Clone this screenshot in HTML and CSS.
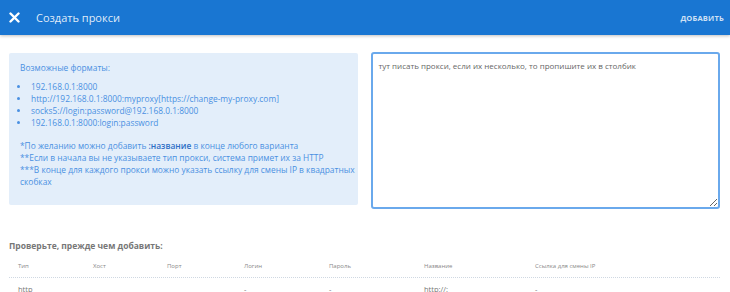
FILE: index.html
```html
<!DOCTYPE html>
<html lang="ru">
<head>
<meta charset="utf-8">
<title>Создать прокси</title>
<link rel="stylesheet" href="styles.css">
</head>
<body>
<header class="topbar">
  <button class="close" aria-label="Закрыть">
    <svg width="11" height="11" viewBox="0 0 11 11"><path d="M1.5 1.5 L9.5 9.5 M9.5 1.5 L1.5 9.5" stroke="#fff" stroke-width="2.4" stroke-linecap="round"/></svg>
  </button>
  <h1 class="title">Создать прокси</h1>
  <button class="add">ДОБАВИТЬ</button>
</header>
<main class="content">
  <section class="editor">
    <div class="hint">
      <p class="hint-title">Возможные форматы:</p>
      <ul class="formats">
        <li>192.168.0.1:8000</li>
        <li>http://192.168.0.1:8000:myproxy[https://change-my-proxy.com]</li>
        <li>socks5://login:password@192.168.0.1:8000</li>
        <li>192.168.0.1:8000:login:password</li>
      </ul>
      <p class="notes">*По желанию можно добавить <b>:название</b> в конце любого варианта<br>**Если в начала вы не указываете тип прокси, система примет их за HTTP<br>***В конце для каждого прокси можно указать ссылку для смены IP в квадратных скобках</p>
    </div>
    <textarea class="input" placeholder="тут писать прокси, если их несколько, то пропишите их в столбик"></textarea>
  </section>
  <section class="preview">
    <h2 class="preview-title">Проверьте, прежде чем добавить:</h2>
    <div class="table">
      <div class="row head">
        <span>Тип</span><span>Хост</span><span>Порт</span><span>Логин</span><span>Пароль</span><span>Название</span><span>Ссылка для смены IP</span>
      </div>
      <div class="row">
        <span>http</span><span></span><span></span><span>-</span><span>-</span><span>http://:</span><span>-</span>
      </div>
    </div>
  </section>
</main>
</body>
</html>
```
FILE: styles.css
```css
* { box-sizing: border-box; }
html, body { margin: 0; padding: 0; background: #fff; }
body { font-family: "Open Sans", "Noto Sans", sans-serif; overflow: hidden; }

.topbar {
  height: 35px;
  background: #1976d2;
  display: flex;
  align-items: center;
  padding: 0 6px 0 7px;
  box-shadow: 0 1px 3px rgba(0,0,0,0.25);
}
.close {
  background: none; border: 0; padding: 0;
  width: 14px; height: 14px;
  display: flex; align-items: center; justify-content: center;
  cursor: pointer;
}
.title {
  margin: 0 0 0 15px;
  font-size: 11px;
  font-weight: 400;
  color: rgba(255,255,255,0.88);
  flex: 1;
}
.add {
  background: none; border: 0; padding: 0;
  font-family: inherit;
  font-size: 7.5px;
  font-weight: 700;
  letter-spacing: 0.2px;
  color: rgba(255,255,255,0.8);
}

.content { padding: 17px 10px 0 9px; }
.editor {
  display: flex;
  gap: 13px;
  align-items: flex-start;
}
.hint {
  width: 349px;
  height: 152px;
  margin-top: 1px;
  background: #e3eefa;
  border-radius: 2px;
  padding: 9px 2px 0 11px;
  color: #4a90e2;
  font-size: 8.4px;
  line-height: 12px;
}
.hint-title { margin: 0 0 7px; }
.formats { margin: 0; padding-left: 10px; }
.formats li { margin: 0; padding-left: 1px; }
.notes { margin: 11px 0 0; }
.notes b { font-weight: 600; color: #2f6fc6; }

.input {
  width: 350px;
  height: 157px;
  border: 2px solid #6aa9ec;
  border-radius: 3px;
  padding: 6px 6px;
  font-family: inherit;
  font-size: 8px;
  resize: vertical;
  outline: none;
  color: #333;
}
.input::placeholder { color: #666; }

.preview { margin-top: 31px; }
.preview-title {
  margin: 0 0 3px;
  font-size: 8.5px;
  line-height: 12px;
  font-weight: 700;
  color: #777;
}
.table { width: 711px; }
.row {
  display: grid;
  grid-template-columns: 75px 74px 77px 85px 95px 111px 1fr;
  padding-left: 9px;
  font-size: 6px;
  color: #888;
}
.row.head {
  height: 23px;
  align-items: center;
  border-bottom: 1px dotted #cfd8e2;
}
.row:not(.head) {
  padding-top: 6px;
  font-size: 7.5px;
  line-height: 11px;
  color: #777;
}
```
